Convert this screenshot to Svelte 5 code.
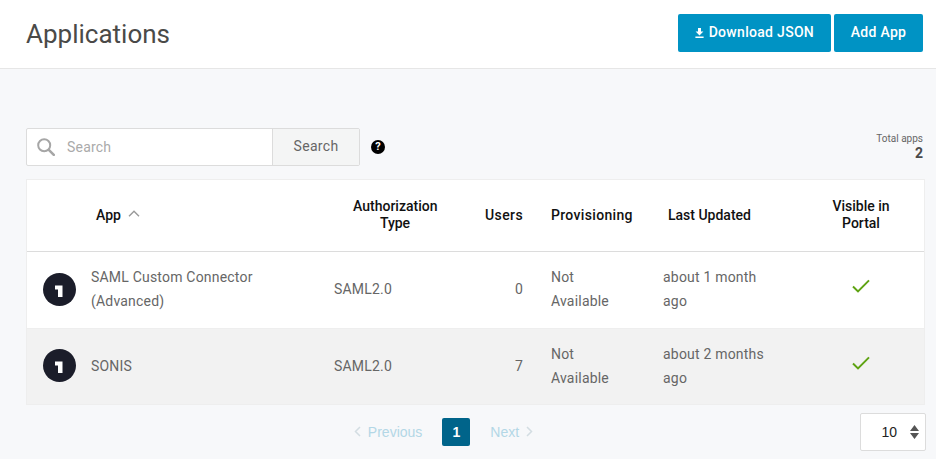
<script>
  const rows = [
    { name: 'SAML Custom Connector (Advanced)', type: 'SAML2.0', users: 0, prov: 'Not Available', updated: 'about 1 month ago' },
    { name: 'SONIS', type: 'SAML2.0', users: 7, prov: 'Not Available', updated: 'about 2 months ago' }
  ];
</script>

<div class="page">
  <header class="top">
    <h1>Applications</h1>
    <div class="actions">
      <button class="primary dl">
        <svg width="9" height="10" viewBox="0 0 9 10" aria-hidden="true"><path d="M3 0h3v3.600h2.400L4.500 7.400.6 3.600H3z M.4 8.600h8.200V10H.4z" fill="#fff"/></svg>
        Download JSON
      </button>
      <button class="primary add">Add App</button>
    </div>
  </header>

  <main class="content">
    <div class="toolbar">
      <div class="search">
        <div class="field">
          <svg width="18" height="18" viewBox="0 0 18 18" aria-hidden="true"><circle cx="7.200" cy="7.200" r="6" fill="none" stroke="#a6a6a6" stroke-width="2"/><path d="M11.800 11.800 16.800 16.800" stroke="#a6a6a6" stroke-width="2.600" stroke-linecap="round"/></svg>
          <span class="ph">Search</span>
        </div>
        <button class="sbtn">Search</button>
      </div>
      <span class="help">?</span>
      <div class="total"><span>Total apps</span><strong>2</strong></div>
    </div>

    <table>
      <colgroup><col class="c1" /><col class="c2" /><col class="c3" /><col class="c4" /><col class="c5" /><col class="c6" /></colgroup>
      <thead>
        <tr>
          <th class="h-app">App
            <svg width="12" height="7" viewBox="0 0 12 7" aria-hidden="true"><path d="M1 6.200 6 1.200l5 5" fill="none" stroke="#999" stroke-width="1.400"/></svg>
          </th>
          <th class="h-auth">Authorization Type</th>
          <th class="h-users">Users</th>
          <th class="h-prov">Provisioning</th>
          <th class="h-upd">Last Updated</th>
          <th class="h-vis">Visible in Portal</th>
        </tr>
      </thead>
      <tbody>
        {#each rows as r}
          <tr>
            <td class="d-app">
              <div class="app">
                <svg class="logo" width="33" height="33" viewBox="0 0 33 33" aria-hidden="true"><circle cx="16.500" cy="16.500" r="16.500" fill="#1b1d2a"/><path d="M12 12.500h7.500v11.500h-4.500v-7.500h-3z" fill="#fff"/></svg>
                <span>{r.name}</span>
              </div>
            </td>
            <td class="d-auth">{r.type}</td>
            <td class="d-users">{r.users}</td>
            <td class="d-prov">{r.prov}</td>
            <td class="d-upd">{r.updated}</td>
            <td class="d-vis">
              <svg width="18" height="14" viewBox="0 0 18 14" aria-hidden="true"><path d="M1 7.500 6 12.400 17 1.400" fill="none" stroke="#5ea312" stroke-width="2"/></svg>
            </td>
          </tr>
        {/each}
      </tbody>
    </table>

    <div class="foot">
      <nav class="pager">
        <span class="pg prev">
          <svg width="7" height="11" viewBox="0 0 7 11" aria-hidden="true"><path d="M6 1 1.500 5.500 6 10" fill="none" stroke="#d3dde2" stroke-width="1.500"/></svg>
          Previous
        </span>
        <span class="cur">1</span>
        <span class="pg next">
          Next
          <svg width="7" height="11" viewBox="0 0 7 11" aria-hidden="true"><path d="M1 1l4.500 4.500L1 10" fill="none" stroke="#d3dde2" stroke-width="1.500"/></svg>
        </span>
      </nav>
      <div class="size">
        <span>10</span>
        <svg width="9" height="14" viewBox="0 0 9 14" aria-hidden="true"><path d="M4.500 0 9 6H0z M0 8h9l-4.500 6z" fill="#555"/></svg>
      </div>
    </div>
  </main>
</div>

<style>
  :global(body) { margin: 0; background: #f7f8fa; }
  .page { width: 936px; height: 459px; overflow: hidden; font-family: Roboto, sans-serif; color: #555; }
  .top { height: 68px; background: #fff; border-bottom: 1px solid #e6e6e6; display: flex; align-items: flex-start; justify-content: space-between; padding: 0 13px 0 26px; }
  h1 { margin: 0; padding-top: 18px; font-size: 26px; line-height: 32px; font-weight: 400; color: #4a4a48; }
  .actions { display: flex; gap: 3px; padding-top: 14px; }
  button { font-family: inherit; cursor: pointer; }
  .primary { height: 38px; border: 0; border-radius: 2px; background: #0093c4; color: #fff; font-size: 14px; font-weight: 500; letter-spacing: .3px; padding: 0 0 2px; }
  .dl { width: 153px; }
  .dl svg { margin-right: 1px; vertical-align: -0.5px; }
  .add { width: 89px; }
  .content { padding: 59px 10px 0 26px; }
  .toolbar { display: flex; align-items: center; height: 38px; position: relative; }
  .search { display: flex; width: 334px; height: 38px; box-sizing: border-box; border: 1px solid #dcdcdc; border-radius: 2px; overflow: hidden; background: #fff; }
  .field { flex: 1; display: flex; align-items: center; gap: 12px; padding-left: 10px; }
  .ph { font-size: 14px; color: #aaa; letter-spacing: .2px; }
  .sbtn { width: 87px; border: 0; border-left: 1px solid #dcdcdc; background: #f4f5f5; color: #666; font-size: 14px; letter-spacing: .3px; padding: 0 0 3px; }
  .help { width: 14px; height: 14px; margin-left: 11px; margin-bottom: 1px; border-radius: 50%; background: #000; color: #fff; font-size: 11px; font-weight: 700; line-height: 14px; text-align: center; }
  .total { margin-left: auto; margin-right: 3px; display: flex; flex-direction: column; align-items: flex-end; padding-bottom: 1px; }
  .total span { font-size: 10px; line-height: 12px; color: #666; }
  .total strong { font-size: 14px; line-height: 16px; font-weight: 700; color: #4a4a4a; }
  table { margin-top: 13px; width: 899px; table-layout: fixed; border-collapse: collapse; background: #fff; outline: 1px solid #eee; outline-offset: -1px; }
  .c1 { width: 303px; } .c2 { width: 132px; } .c3 { width: 67px; } .c4 { width: 130px; } .c5 { width: 139px; } .c6 { width: 128px; }
  th { height: 72px; padding: 0; font-size: 14px; line-height: 17px; font-weight: 500; color: #111; border-bottom: 1px solid #dcdcdc; }
  td { padding: 0 0 2px; box-sizing: border-box; height: 77px; font-size: 14px; line-height: 24px; color: #666; letter-spacing: .2px; border-bottom: 1px solid #eee; }
  tbody tr:nth-child(2) td { background: #f2f2f2; height: 76px; border-bottom: 0; }
  .h-app { text-align: left; padding-left: 70px; }
  .h-app svg { margin-left: 4px; vertical-align: 3px; }
  .h-auth { text-align: center; padding: 0 24px; }
  .h-users { text-align: right; padding-right: 5px; letter-spacing: .4px; }
  .h-prov { text-align: left; padding-left: 23px; letter-spacing: .33px; }
  .h-upd { text-align: left; padding-left: 10px; }
  .h-vis { text-align: center; padding: 0 30px; }
  .app { display: flex; align-items: center; gap: 15px; padding-left: 17px; padding-right: 40px; }
  .logo { flex: none; }
  .d-auth { padding-left: 5px; }
  .d-users { text-align: right; padding-right: 5px; }
  .d-prov { padding-left: 23px; padding-right: 45px; }
  .d-upd { padding-left: 5px; padding-right: 28px; }
  .d-vis svg { display: block; margin: 0 auto 6px; }
  .foot { position: relative; height: 54px; display: flex; justify-content: center; padding-right: 64px; }
  .pager { display: flex; align-items: center; height: 28px; margin-top: 13px; margin-left: -1px; font-family: "Liberation Sans", Arial, sans-serif; font-size: 14px; color: #b3d7e6; }
  .pg { display: flex; align-items: center; gap: 7px; }
  .prev { margin-right: 20px; }
  .next { margin-left: 20px; }
  .cur { width: 28px; height: 28px; border-radius: 2px; background: #00648a; color: #fff; font-weight: 700; line-height: 28px; text-align: center; }
  .size { position: absolute; right: 0; top: 8px; width: 66px; height: 38px; box-sizing: border-box; background: #fff; border: 1px solid #dcdcdc; border-radius: 2px; display: flex; align-items: center; justify-content: flex-end; gap: 13px; padding-right: 6px; font-family: "Liberation Sans", Arial, sans-serif; font-size: 14px; color: #222; }
</style>
